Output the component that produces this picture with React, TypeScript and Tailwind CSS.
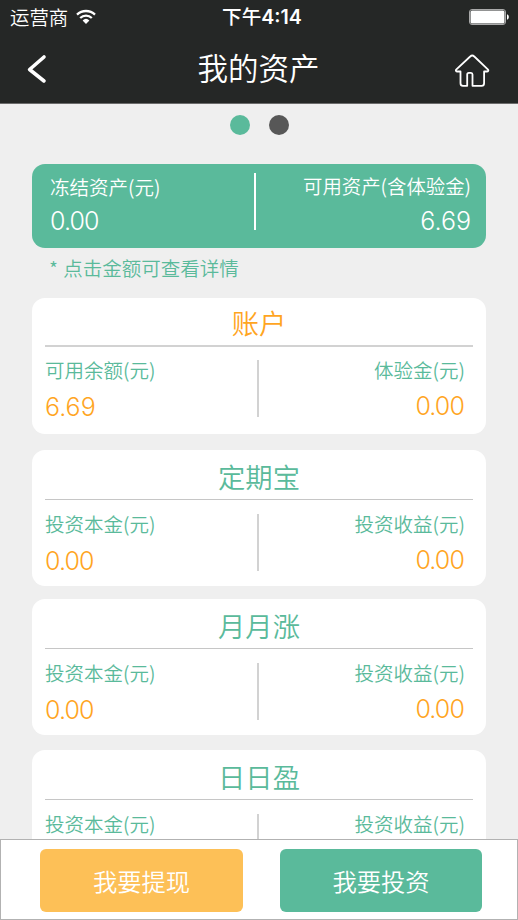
import clsx from "clsx";

const accounts = [
  {
    title: "账户",
    highlight: true,
    left: { label: "可用余额(元)", value: "6.69" },
    right: { label: "体验金(元)", value: "0.00" },
    spacing: "mt-4",
  },
  {
    title: "定期宝",
    left: { label: "投资本金(元)", value: "0.00" },
    right: { label: "投资收益(元)", value: "0.00" },
    spacing: "mt-4",
  },
  {
    title: "月月涨",
    left: { label: "投资本金(元)", value: "0.00" },
    right: { label: "投资收益(元)", value: "0.00" },
    spacing: "mt-[13px]",
  },
  {
    title: "日日盈",
    left: { label: "投资本金(元)", value: "0.00" },
    right: { label: "投资收益(元)", value: "0.00" },
    spacing: "mt-[15px]",
  },
];

function StatusBar() {
  return (
    <div className="grid grid-cols-3 items-center h-8 pl-[10px] pr-[9px]">
      <div className="flex items-center gap-2 text-[19.4px] leading-8">
        运营商
        <svg width="20" height="16" viewBox="0 0 20 16" fill="none">
          <g stroke="#fff" strokeWidth="2.3">
            <path d="M1 5.6a13 13 0 0 1 18 0" />
            <path d="M4.2 9a8.4 8.4 0 0 1 11.6 0" />
          </g>
          <path d="M6.6 11.4a5 5 0 0 1 6.8 0L10 15z" fill="#fff" />
        </svg>
      </div>
      <div className="pl-[5px] text-center text-[19.6px] leading-8 font-medium whitespace-nowrap">
        下午<span className="font-['Inter'] font-semibold">4:14</span>
      </div>
      <svg className="justify-self-end" width="40" height="16" viewBox="0 0 40 16">
        <rect x=".5" y=".5" width="36" height="15" rx="2.5" fill="none" stroke="#aaa" />
        <rect x="1.5" y="1.5" width="34" height="13" rx="1.5" fill="#fff" />
        <path d="M38 5.3c2.4.6 2.4 4.8 0 5.4z" fill="#fff" />
      </svg>
    </div>
  );
}

function Header() {
  return (
    <header className="h-[104px] shrink-0 bg-[#252726] text-white border-b border-[#6b6b6b]">
      <StatusBar />
      <div className="flex items-center justify-between h-[71px] pl-[27px] pr-[28px]">
        <svg className="mt-[3px]" width="20" height="30" viewBox="0 0 20 30" fill="none">
          <path
            d="M17 3 2.6 15.5 17 27"
            stroke="#fff"
            strokeWidth="3.6"
            strokeLinecap="round"
            strokeLinejoin="round"
          />
        </svg>
        <h1 className="text-[30.5px] leading-[71px] pl-4">我的资产</h1>
        <svg className="mt-[7px]" width="36" height="34" viewBox="0 0 36 34" fill="none">
          <path
            d="M6.5 17.5H3.4c-1.5 0-2-1.2-1-2.2L16.2 2.5c1.3-1.3 2.8-1.3 4.1 0L33.800 15.300c1 1 .5 2.200-1 2.200h-2.700v11.700c0 1.500-1 2.600-2.500 2.600H18.500V20.500c0-1-.5-1.600-1.500-1.600h-2.200c-1 0-1.600.6-1.600 1.600v11.300H9c-1.500 0-2.500-1.100-2.500-2.600z"
            stroke="#fff"
            strokeWidth="1.8"
            strokeLinejoin="round"
          />
        </svg>
      </div>
    </header>
  );
}

function Amount({ value, className }: { value: string; className?: string }) {
  return (
    <div
      className={clsx(
        "font-['Inter'] text-[25px] leading-9",
        value === "0.00" && "tracking-[-0.035em]",
        className
      )}
    >
      {value}
    </div>
  );
}

function Summary() {
  return (
    <section className="flex justify-between shrink-0 h-[84px] mt-[29px] pr-[15px] pl-[18px] rounded-[13px] bg-[#5aba9b] text-white">
      <div className="pt-[9px]">
        <div className="text-[19.5px] leading-7">冻结资产(元)</div>
        <Amount value="0.00" className="mt-[2px]" />
      </div>
      <div className="flex">
        <div className="w-[2px] h-[57px] mt-[9px] bg-white" />
        <div className="w-[215px] pt-2 text-right">
          <div className="text-[19.4px] leading-7">可用资产(含体验金)</div>
          <Amount value="6.69" className="mt-[3px]" />
        </div>
      </div>
    </section>
  );
}

function AccountCard({ account }: { account: (typeof accounts)[number] }) {
  return (
    <section
      className={clsx(
        "h-[136px] shrink-0 px-[13px] rounded-[13px] bg-white",
        account.spacing
      )}
    >
      <h2
        className={clsx(
          "text-center text-[27.3px]",
          account.highlight
            ? "h-[49px] leading-[49px] border-b-2 border-[#d2d2d2] text-[#ffa51f]"
            : "h-[50px] leading-[52px] mb-px border-b border-[#c6c6c6] text-[#5aba9b]"
        )}
      >
        {account.title}
      </h2>
      <div className="flex justify-between pr-2 pt-[9px]">
        <div className="w-[212px]">
          <div className="text-[19.5px] leading-7 text-[#5aba9b]">{account.left.label}</div>
          <Amount value={account.left.value} className="mt-[5px] text-[#ffa51f]" />
        </div>
        <div className="w-[2px] h-[57px] mt-1 bg-[#d2d2d2]" />
        <div className="flex-1 text-right">
          <div className="text-[19.5px] leading-7 text-[#5aba9b]">{account.right.label}</div>
          <Amount value={account.right.value} className="mt-1 pr-px text-[#ffa51f]" />
        </div>
      </div>
    </section>
  );
}

export default function App() {
  return (
    <div className="flex flex-col w-[518px] h-[920px] overflow-hidden bg-[#efefef] font-['Noto_Sans_CJK_SC',sans-serif] font-[350]">
      <Header />
      <main className="flex-1 min-h-0 overflow-hidden flex flex-col px-8">
        <div className="flex justify-center gap-[19px] pt-[11px]">
          <span className="size-5 rounded-full bg-[#5aba9b]" />
          <span className="size-5 rounded-full bg-[#575757]" />
        </div>
        <Summary />
        <p className="pl-[17px] mt-[6px] text-[19.5px] leading-7 text-[#5aba9b]">
          <span className="mr-px">*</span> 点击金额可查看详情
        </p>
        {accounts.map((account) => (
          <AccountCard key={account.title} account={account} />
        ))}
      </main>
      <footer className="flex justify-between h-[81px] shrink-0 pt-[9px] pl-[39px] pr-[35px] border border-[#b2b2b2] bg-white text-white text-[24.3px]">
        <button className="w-[203px] h-[63px] rounded-[6px] leading-[62px] bg-[#fdc057]">我要提现</button>
        <button className="w-[202px] h-[63px] rounded-[6px] leading-[62px] bg-[#5aba9b]">我要投资</button>
      </footer>
    </div>
  );
}
